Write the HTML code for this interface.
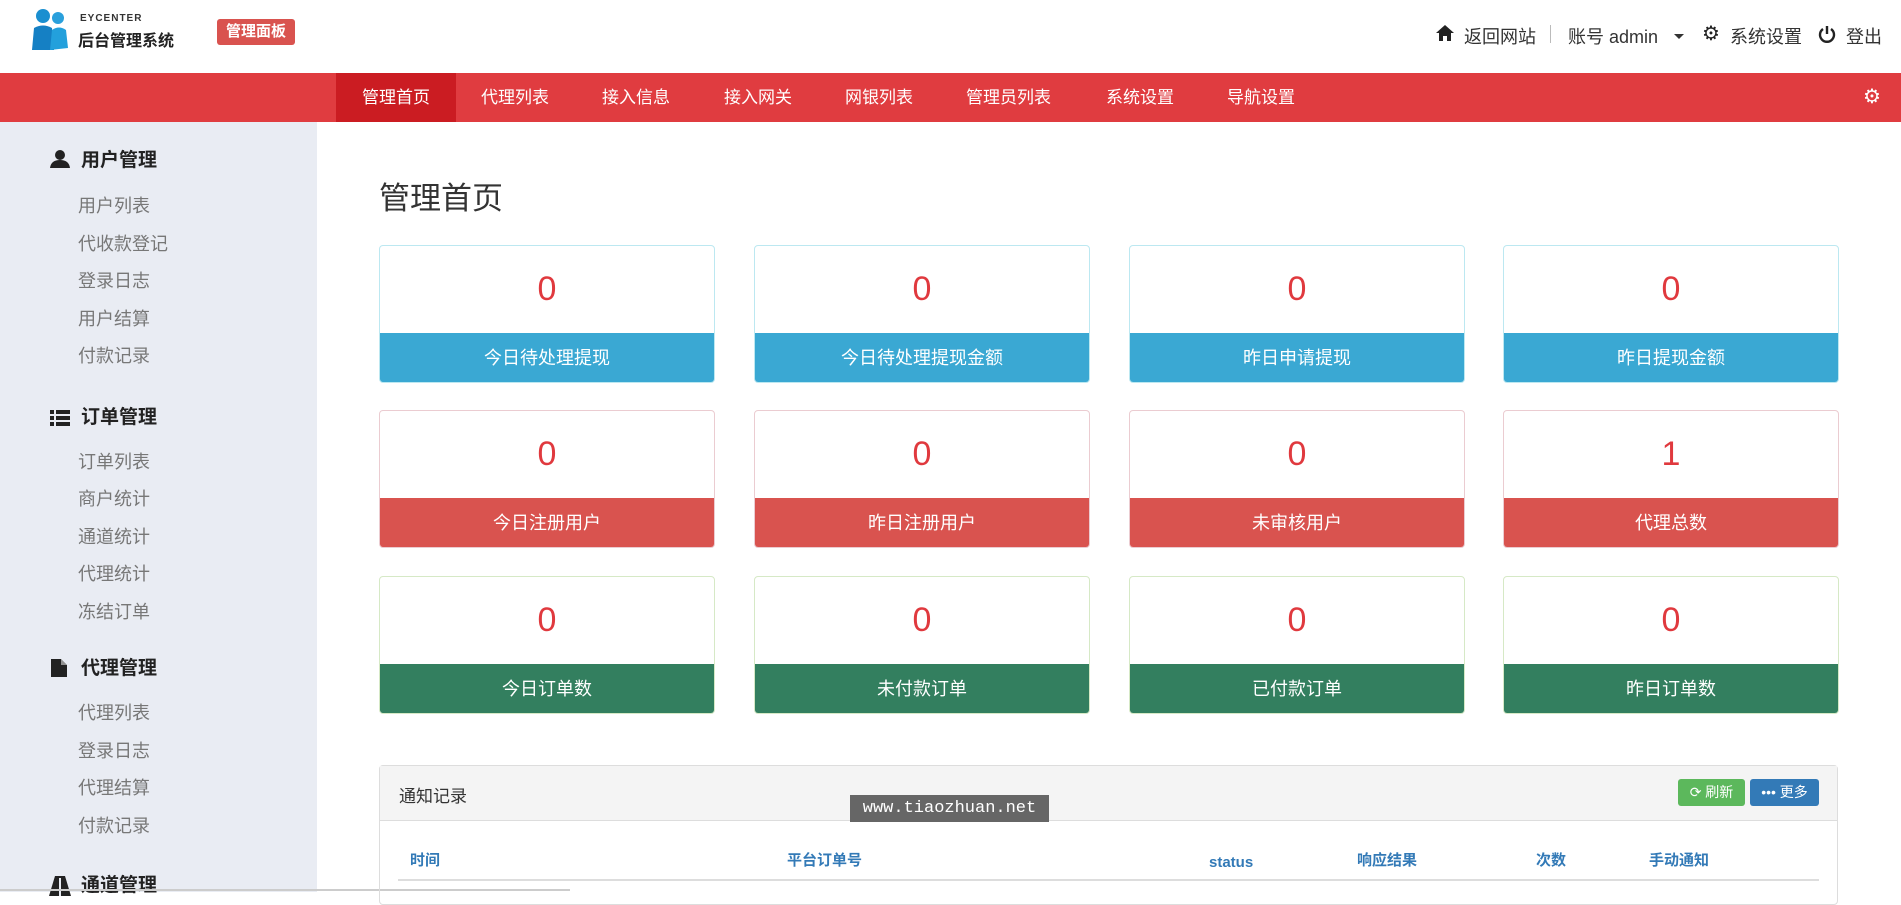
<!DOCTYPE html>
<html><head><meta charset="utf-8">
<style>
*{margin:0;padding:0;box-sizing:border-box}
body{width:1901px;height:892px;overflow:hidden;font-family:"Liberation Sans","Noto Sans CJK SC",sans-serif;background:#fff;position:relative;color:#333}
.abs{position:absolute}
.hdr{top:0;left:0;width:1901px;height:73px;background:#fff}
.nav{top:73px;left:0;width:1901px;height:49px;background:#e03c40}
.nav span{position:absolute;top:0;height:49px;line-height:49px;color:#fff;font-size:17px}
.side{top:122px;left:0;width:317px;height:770px;background:#e9ecf3}
.sh{position:absolute;left:81px;font-size:19px;font-weight:bold;color:#222;line-height:22px}
.si{position:absolute;left:78px;font-size:18px;color:#777;line-height:22px}
.ic{position:absolute;left:50px}
.card{position:absolute;width:336px;height:138px;border:1px solid;border-radius:4px;overflow:hidden;background:#fff}
.card .n{height:87px;line-height:87px;text-align:center;font-size:34px;color:#e0393e}
.card .l{height:51px;line-height:50px;text-align:center;font-size:18px;color:#fff}
.th{position:absolute;top:850px;font-size:15px;font-weight:bold;color:#337ab7;line-height:22px;height:22px}
</style></head><body>
<div class="abs hdr">
  <svg class="abs" style="left:30px;top:6px" width="42" height="46" viewBox="0 0 42 46">
    <circle cx="13" cy="10" r="7" fill="#1a8fd0"/><circle cx="28" cy="12" r="6" fill="#2aa0dc"/>
    <path d="M2 44 L4 22 Q13 17 22 22 L24 44Z" fill="#1580c4"/><path d="M20 44 L22 24 Q29 19 36 24 L38 42Z" fill="#23a0dc"/>
  </svg>
  <div class="abs" style="left:80px;top:13px;font-size:10px;font-weight:bold;color:#333;letter-spacing:1px">EYCENTER</div>
  <div class="abs" style="left:78px;top:27px;font-size:16px;font-weight:bold;color:#222">后台管理系统</div>
  <div class="abs" style="left:217px;top:19px;width:78px;height:26px;background:#d9534f;border-radius:3px;color:#fff;font-size:15px;font-weight:bold;text-align:center;line-height:26px">管理面板</div>
  <svg class="abs" style="left:1436px;top:25px" width="18" height="16" viewBox="0 0 18 16"><path d="M9 0 L18 8 L15 8 L15 16 L11 16 L11 11 L7 11 L7 16 L3 16 L3 8 L0 8Z" fill="#222"/></svg>
  <div class="abs" style="left:1464px;top:23px;font-size:18px;color:#333">返回网站</div>
  <div class="abs" style="left:1550px;top:25px;width:1px;height:18px;background:#bbb"></div>
  <div class="abs" style="left:1568px;top:23px;font-size:18px;color:#333">账号 admin</div>
  <div class="abs" style="left:1674px;top:34px;border-left:5px solid transparent;border-right:5px solid transparent;border-top:5px solid #333"></div>
  <div class="abs" style="left:1702px;top:21px;font-size:20px;color:#222">⚙</div>
  <div class="abs" style="left:1730px;top:23px;font-size:18px;color:#333">系统设置</div>
  <svg class="abs" style="left:1818px;top:25px" width="18" height="18" viewBox="0 0 18 18"><path d="M5 4 A7 7 0 1 0 13 4" stroke="#222" stroke-width="2.4" fill="none"/><line x1="9" y1="1" x2="9" y2="9" stroke="#222" stroke-width="2.4"/></svg>
  <div class="abs" style="left:1846px;top:23px;font-size:18px;color:#333">登出</div>
</div>
<div class="abs nav">
  <span style="left:336px;width:120px;background:#cb1c22;text-align:center">管理首页</span>
  <span style="left:481px">代理列表</span>
  <span style="left:602px">接入信息</span>
  <span style="left:724px">接入网关</span>
  <span style="left:845px">网银列表</span>
  <span style="left:966px">管理员列表</span>
  <span style="left:1106px">系统设置</span>
  <span style="left:1227px">导航设置</span>
  <span style="left:1863px;font-size:20px">⚙</span>
</div>
<div class="abs side">
  <svg class="ic" style="top:28px" width="20" height="18" viewBox="0 0 20 18"><circle cx="10" cy="5" r="5" fill="#222"/><path d="M0 18 Q1 10 10 10 Q19 10 20 18Z" fill="#222"/></svg>
  <div class="sh" style="top:28px">用户管理</div>
  <div class="si" style="top:73px">用户列表</div><div class="si" style="top:111px">代收款登记</div><div class="si" style="top:148px">登录日志</div><div class="si" style="top:186px">用户结算</div><div class="si" style="top:223px">付款记录</div>
  <svg class="ic" style="top:288px" width="20" height="16" viewBox="0 0 20 16"><g fill="#222"><rect x="0" y="0" width="4" height="4"/><rect x="6" y="0" width="14" height="4"/><rect x="0" y="6" width="4" height="4"/><rect x="6" y="6" width="14" height="4"/><rect x="0" y="12" width="4" height="4"/><rect x="6" y="12" width="14" height="4"/></g></svg>
  <div class="sh" style="top:285px">订单管理</div>
  <div class="si" style="top:329px">订单列表</div><div class="si" style="top:366px">商户统计</div><div class="si" style="top:404px">通道统计</div><div class="si" style="top:441px">代理统计</div><div class="si" style="top:479px">冻结订单</div>
  <svg class="ic" style="top:537px;left:51px" width="16" height="18" viewBox="0 0 16 18"><path d="M0 0 L10 0 L16 6 L16 18 L0 18Z" fill="#222"/><path d="M10 0 L10 6 L16 6" fill="#fff" opacity=".5"/></svg>
  <div class="sh" style="top:536px">代理管理</div>
  <div class="si" style="top:580px">代理列表</div><div class="si" style="top:618px">登录日志</div><div class="si" style="top:655px">代理结算</div><div class="si" style="top:693px">付款记录</div>
  <svg class="ic" style="top:754px;left:49px" width="22" height="20" viewBox="0 0 22 20"><path d="M6 0 L16 0 L22 20 L0 20Z" fill="#222"/><rect x="10" y="2" width="2" height="18" fill="#e9ecf3"/></svg>
  <div class="sh" style="top:753px">通道管理</div>
</div>
<div class="abs" style="left:0;top:889px;width:570px;height:2px;background:#ccc"></div>

<div class="abs" style="left:379px;top:173px;font-size:31px;color:#333">管理首页</div>

<div class="card" style="left:379px;top:245px;border-color:#bce8f1"><div class="n">0</div><div class="l" style="background:#3aa8d3">今日待处理提现</div></div>
<div class="card" style="left:754px;top:245px;border-color:#bce8f1"><div class="n">0</div><div class="l" style="background:#3aa8d3">今日待处理提现金额</div></div>
<div class="card" style="left:1129px;top:245px;border-color:#bce8f1"><div class="n">0</div><div class="l" style="background:#3aa8d3">昨日申请提现</div></div>
<div class="card" style="left:1503px;top:245px;border-color:#bce8f1"><div class="n">0</div><div class="l" style="background:#3aa8d3">昨日提现金额</div></div>

<div class="card" style="left:379px;top:410px;border-color:#ebccd1"><div class="n">0</div><div class="l" style="background:#d9534f">今日注册用户</div></div>
<div class="card" style="left:754px;top:410px;border-color:#ebccd1"><div class="n">0</div><div class="l" style="background:#d9534f">昨日注册用户</div></div>
<div class="card" style="left:1129px;top:410px;border-color:#ebccd1"><div class="n">0</div><div class="l" style="background:#d9534f">未审核用户</div></div>
<div class="card" style="left:1503px;top:410px;border-color:#ebccd1"><div class="n">1</div><div class="l" style="background:#d9534f">代理总数</div></div>

<div class="card" style="left:379px;top:576px;border-color:#d6e9c6"><div class="n">0</div><div class="l" style="background:#337f5f">今日订单数</div></div>
<div class="card" style="left:754px;top:576px;border-color:#d6e9c6"><div class="n">0</div><div class="l" style="background:#337f5f">未付款订单</div></div>
<div class="card" style="left:1129px;top:576px;border-color:#d6e9c6"><div class="n">0</div><div class="l" style="background:#337f5f">已付款订单</div></div>
<div class="card" style="left:1503px;top:576px;border-color:#d6e9c6"><div class="n">0</div><div class="l" style="background:#337f5f">昨日订单数</div></div>

<div class="abs" style="left:379px;top:765px;width:1459px;height:140px;border:1px solid #ddd;border-radius:4px">
  <div style="height:55px;background:#f4f4f4;border-bottom:1px solid #ddd"></div>
</div>
<div class="abs" style="left:399px;top:782px;font-size:17px;color:#333">通知记录</div>
<div class="abs" style="left:1678px;top:779px;width:67px;height:27px;background:#5cb85c;border-radius:3px;color:#fff;font-size:14px;line-height:27px;text-align:center">⟳ 刷新</div>
<div class="abs" style="left:1750px;top:779px;width:69px;height:27px;background:#337ab7;border-radius:3px;color:#fff;font-size:14px;line-height:27px;text-align:center">••• 更多</div>
<div class="abs" style="left:850px;top:795px;width:199px;height:27px;background:#666;color:#fff;font-family:'Liberation Mono',monospace;font-size:17px;line-height:27px;text-align:center">www.tiaozhuan.net</div>
<div class="th" style="left:410px">时间</div>
<div class="th" style="left:787px">平台订单号</div>
<div class="th" style="left:1209px;top:852px">status</div>
<div class="th" style="left:1357px">响应结果</div>
<div class="th" style="left:1536px">次数</div>
<div class="th" style="left:1649px">手动通知</div>
<div class="abs" style="left:398px;top:879px;width:1421px;height:2px;background:#ddd"></div>
</body></html>
